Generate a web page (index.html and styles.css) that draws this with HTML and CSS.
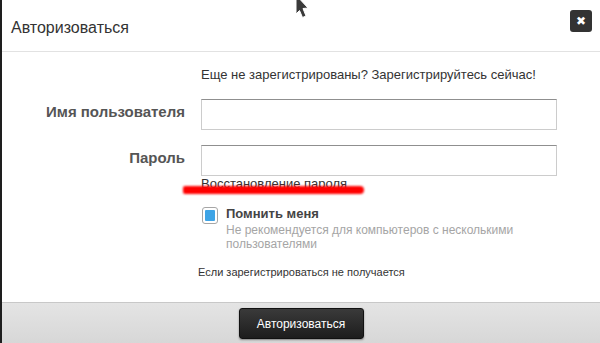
FILE: index.html
```html
<!DOCTYPE html>
<html>
<head>
  <meta charset="utf-8" />
  <title>Авторизоваться</title>
  <link rel="stylesheet" href="styles.css">
</head>
<body>
  <div class="modal">
    <div class="modal-header">
      <h3 class="modal-title">Авторизоваться</h3>
      <span class="close-btn">&#x2716;</span>
    </div>

    <div class="modal-body">
      <div class="form-grid">
        <div></div>
        <p class="register-hint">Еще не зарегистрированы? Зарегистрируйтесь сейчас!</p>

        <label class="field-label">Имя пользователя</label>
        <input type="text" class="field-input" />

        <label class="field-label">Пароль</label>
        <div class="field-wrap">
          <input type="password" class="field-input" />
          <a class="recover-link">Восстановление пароля</a>
          <span class="marker"></span>
        </div>

        <div></div>
        <div class="remember">
          <span class="check-box"><span class="check-fill"></span></span>
          <div class="remember-text">
            <b>Помнить меня</b>
            <span class="remember-note">Не рекомендуется для компьютеров с несколькими пользователями</span>
          </div>
        </div>

        <div></div>
        <p class="trouble">Если зарегистрироваться не получается</p>
      </div>
    </div>

    <div class="modal-footer">
      <button class="login-btn">Авторизоваться</button>
    </div>
  </div>

  <svg class="cursor" width="16" height="22" viewBox="0 0 16 22">
    <polygon points="1,-5 13,8 8,8.5 11,16 7.5,17.5 4.5,10.5 1,14" fill="#3a3a3a" stroke="#fff" stroke-width="1" />
  </svg>
</body>
</html>
```

FILE: styles.css
```css
body {
  margin: 0;
  background-color: #1e1e1e;
  font-family: "Liberation Sans", Arial, sans-serif;
  color: #333;
  height: 343px;
  overflow: hidden;
}

.modal {
  margin-left: 2px;
  height: 343px;
  background-color: #fff;
  overflow: hidden;
}

.modal-header {
  height: 52px;
  box-sizing: border-box;
  border-bottom: 1px solid #e2e2e2;
  display: flex;
  justify-content: space-between;
  align-items: flex-start;
  padding: 0 8px 0 9px;
}

.modal-title {
  margin: 18px 0 0 0;
  font-size: 16px;
  font-weight: normal;
  line-height: 20px;
  color: #333;
}

.close-btn {
  margin-top: 10px;
  width: 22px;
  height: 22px;
  border-radius: 3px;
  background-color: #333;
  color: #fff;
  font-size: 12px;
  line-height: 22px;
  text-align: center;
}

.modal-body {
  height: 250px;
  box-sizing: border-box;
  padding-top: 14px;
}

.form-grid {
  display: grid;
  grid-template-columns: 183px 356px;
  column-gap: 16px;
  align-items: start;
}

.register-hint {
  margin: 0 0 15px 0;
  font-size: 13px;
  line-height: 18px;
}

.field-label {
  font-size: 15px;
  font-weight: bold;
  color: #555;
  text-align: right;
  line-height: 26px;
}

.field-input {
  width: 356px;
  height: 31px;
  box-sizing: border-box;
  border: 1px solid #ccc;
  border-top-color: #8f8f8f;
  margin: 0 0 15px 0;
  padding: 4px 6px;
  display: block;
}

.field-wrap {
  position: relative;
}

.field-wrap .field-input {
  margin-bottom: 0;
}

.recover-link {
  display: block;
  font-size: 13px;
  line-height: 15px;
  color: #333;
}

.marker {
  position: absolute;
  left: -18px;
  top: 41px;
  width: 181px;
  height: 8px;
  border-radius: 3px 6px 6px 3px;
  background-color: #ff0000;
  filter: blur(0.8px);
}

.remember {
  display: flex;
  gap: 8px;
  margin-top: 16px;
}

.check-box {
  width: 16px;
  height: 17px;
  box-sizing: border-box;
  border: 1px solid #a6a6a6;
  border-radius: 3px;
  background-color: #fff;
  padding: 2px;
  margin-left: 1px;
  flex-shrink: 0;
}

.check-fill {
  display: block;
  width: 10px;
  height: 11px;
  background-color: #3ea4e6;
  border-radius: 1px;
}

.remember-text {
  font-size: 13px;
  line-height: 14px;
}

.remember-text b {
  display: block;
  color: #444;
  line-height: 14px;
  margin-bottom: 2px;
}

.remember-note {
  color: #a5a5a5;
  font-size: 12px;
}

.trouble {
  margin: 14px 0 0 -3px;
  font-size: 11px;
  line-height: 14px;
}

.modal-footer {
  height: 60px;
  border-top: 1px solid #c8c8c8;
  background: linear-gradient(#e4e4e4, #cfcfcf);
  display: flex;
  justify-content: center;
  align-items: flex-start;
  padding-top: 5px;
}

.login-btn {
  width: 125px;
  height: 31px;
  background: linear-gradient(#3a3a3a, #1d1d1d);
  color: #fff;
  border: 1px solid #111;
  border-radius: 3px;
  font-family: "Liberation Sans", Arial, sans-serif;
  font-size: 12px;
  box-shadow: 0 1px 2px rgba(0, 0, 0, 0.4);
}

.cursor {
  position: absolute;
  left: 295px;
  top: 0;
}
```
